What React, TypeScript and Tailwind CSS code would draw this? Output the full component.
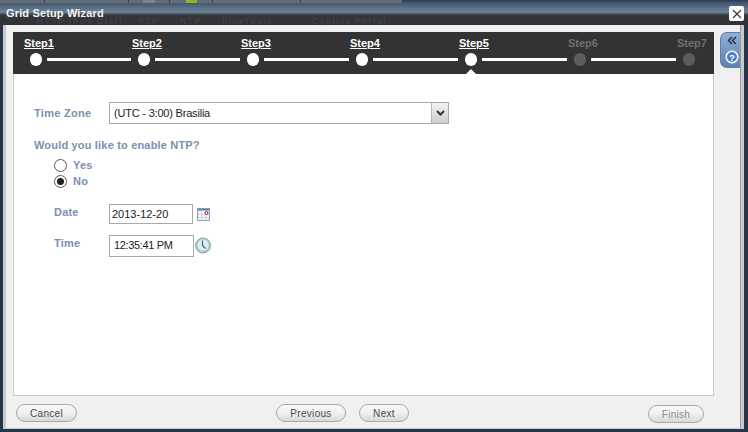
const steps = [
  { name: "Step1", active: true, width: "w-[108px]", line: "w-[84px]" },
  { name: "Step2", active: true, width: "w-[109px]", line: "w-[85px]" },
  { name: "Step3", active: true, width: "w-[109px]", line: "w-[85px]" },
  { name: "Step4", active: true, width: "w-[109px]", line: "w-[85px]" },
  { name: "Step5", active: true, width: "w-[109px]", line: "w-[85px]", current: true },
  { name: "Step6", active: false, width: "w-[109px]", line: "w-[85px]" },
  { name: "Step7", active: false, width: "w-[32px]" },
];

function Step({ name, active, current, width, line }: { name: string; active: boolean; current?: boolean; width: string; line?: string }) {
  return (
    <div className={`relative flex h-[42px] flex-col ${width}`}>
      <span
        className={`mt-[5px] h-[13px] text-[11px] font-bold leading-[13px] ${
          active ? "text-white underline" : "text-[#707070]"
        }`}
      >
        {name}
      </span>
      <div className="mt-[3px] flex items-center">
        <div className={`ml-[6px] h-[13px] w-[12px] shrink-0 rounded-full ${active ? "bg-white" : "bg-[#5c5c5c]"}`} />
        {line && <div className={`ml-[5px] h-[3px] ${line} bg-white`} />}
      </div>
      {current && (
        <div className="absolute bottom-0 left-[7px] h-0 w-0 border-x-[5px] border-b-[5px] border-x-transparent border-b-white" />
      )}
    </div>
  );
}

function PillButton({ label, className, disabled }: { label: string; className: string; disabled?: boolean }) {
  return (
    <button
      className={`h-[18px] shrink-0 rounded-full border border-[#a8a8a8] bg-gradient-to-b from-[#f8f8f8] via-[#f0f0f0] to-[#d8d8d8] text-[10px] leading-[15px] tracking-[0.3px] ${className} ${
        disabled ? "text-[#8a8a8a]" : "text-[#4a4a4a]"
      }`}
    >
      {label}
    </button>
  );
}

function Radio({ label, checked }: { label: string; checked?: boolean }) {
  return (
    <div className="flex h-[16px] items-center">
      <span className="flex h-[13px] w-[13px] items-center justify-center rounded-full border border-[#555555] bg-white">
        {checked && <span className="h-[7px] w-[7px] rounded-full bg-[#222222]" />}
      </span>
      <span className="ml-[6px] text-[11px] font-bold tracking-[0.2px] text-[#7b8fae]">{label}</span>
    </div>
  );
}

function CalendarIcon() {
  return (
    <svg width="13" height="13" viewBox="0 0 13 13" className="ml-[4px]">
      <rect x="0.5" y="0.5" width="12" height="12" fill="#f1f3f6" stroke="#8ba0b8" />
      <rect x="1" y="1" width="11" height="1.5" fill="#5f7fa3" />
      <path d="M1 6.5h11M1 9.5h11M4.5 3v9M8.5 3v9" stroke="#d3d9e0" fill="none" />
      <circle cx="9.5" cy="5" r="1.5" fill="#f1f3f6" stroke="#a01d2c" />
    </svg>
  );
}

function ClockIcon() {
  return (
    <svg width="16" height="17" viewBox="0 0 16 17" className="ml-[1px]">
      <circle cx="8" cy="8.5" r="7.5" fill="#a9cdd0" stroke="#7fa5ad" />
      <circle cx="8" cy="8" r="5.5" fill="#dfeced" />
      <path d="M7.5 3.5v5l3 3" stroke="#47677a" strokeWidth="1.2" fill="none" />
    </svg>
  );
}

const tabSeparators = ["left-[44px]", "left-[128px]", "left-[169px]", "left-[212px]", "left-[300px]"];

export default function App() {
  return (
    <div className="relative flex h-[432px] w-[748px] flex-col overflow-hidden bg-[#24344b] font-['Liberation_Sans',Arial,sans-serif]">
      <div className="relative h-[25px] shrink-0 overflow-hidden bg-[linear-gradient(to_bottom,#2c3b50_0px,#44586f_3px,#6d8298_12px,#5b6e81_13px,#343639_15px,#2f3337_25px)]">
        <div className="absolute left-0 top-0 h-[3px] w-[402px] bg-[#626d75]" />
        {tabSeparators.map((s) => (
          <div key={s} className={`absolute top-0 h-[3px] w-[1px] bg-[#3a4048] ${s}`} />
        ))}
        <div className="absolute left-[143px] top-0 h-[3px] w-[12px] bg-[#7a8389]" />
        <div className="absolute left-[186px] top-0 h-[3px] w-[11px] bg-[#8fb520]" />
        <div className="absolute left-[37px] top-[17px] flex text-[9px] font-bold leading-[8px] text-[#3d4146]">
          <span className="w-[102px] tracking-[1.2px]">HTTP (File Dist)</span>
          <span className="w-[41px] tracking-[1px]">FTP</span>
          <span className="w-[42px] tracking-[1px]">NTP</span>
          <span className="w-[90px] tracking-[1px]">bloxTools</span>
          <span className="tracking-[1px]">Captive Portal</span>
        </div>
        <span className="absolute left-[6px] top-[9px] text-[11px] font-bold leading-[8px] tracking-[0.15px] text-[#f2f2f2]">
          Grid Setup Wizard
        </span>
        <div className="absolute right-[4px] top-[6px] flex h-[15px] w-[15px] items-center justify-center rounded-[2px] bg-white">
          <svg width="10" height="10" viewBox="0 0 10 10">
            <path d="M1 1l8 8M9 1l-8 8" stroke="#333333" strokeWidth="1.1" fill="none" />
          </svg>
        </div>
      </div>

      <div className="mb-[3px] ml-[3px] mr-[4px] flex min-h-0 flex-1 border-b border-l-[3px] border-r-[3px] border-[#c9cacb] bg-[#f0f0f0]">
        <div className="flex min-w-0 flex-1 flex-col pl-[7px] pt-[7px]">
          <div className="flex h-[42px] w-[701px] shrink-0 bg-[#333333] pl-[11px]">
            {steps.map((s) => (
              <Step key={s.name} {...s} />
            ))}
          </div>
          <div className="h-[322px] w-[701px] shrink-0 border-b border-l border-r border-[#cccccc] bg-white pl-[20px] pt-[28px]">
            <div className="flex items-center">
              <span className="w-[75px] text-[11px] font-bold tracking-[0.3px] text-[#7b8fae]">Time Zone</span>
              <div className="flex h-[22px] w-[340px] items-center border border-[#a9a9a9] bg-white pl-[4px]">
                <span className="flex-1 text-[11px] tracking-[-0.2px] text-[#222222]">(UTC - 3:00) Brasilia</span>
                <div className="flex h-full w-[17px] items-center justify-center border-l border-[#b5b5b5] bg-gradient-to-b from-[#f2f2f2] to-[#cfcfcf]">
                  <svg width="9" height="6" viewBox="0 0 9 6">
                    <path d="M1 1l3.5 3.5L8 1" stroke="#333333" strokeWidth="2" fill="none" />
                  </svg>
                </div>
              </div>
            </div>
            <div className="mt-[15px] h-[13px] text-[11px] font-bold leading-[13px] tracking-[0.18px] text-[#7b8fae]">
              Would you like to enable NTP?
            </div>
            <div className="ml-[20px] mt-[5px] flex flex-col">
              <Radio label="Yes" />
              <Radio label="No" checked />
            </div>
            <div className="mt-[15px] flex items-center">
              <span className="mb-[4px] ml-[20px] w-[55px] text-[11px] font-bold tracking-[0.2px] text-[#7b8fae]">Date</span>
              <div className="flex h-[20px] w-[84px] items-center border border-[#a9a9a9] bg-white pl-[2px] text-[11px] text-[#222222]">
                2013-12-20
              </div>
              <CalendarIcon />
            </div>
            <div className="mt-[10px] flex items-center">
              <span className="mb-[4px] ml-[20px] w-[55px] text-[11px] font-bold tracking-[0.2px] text-[#7b8fae]">Time</span>
              <div className="flex h-[22px] w-[85px] items-center border border-[#a9a9a9] bg-white pl-[4px] text-[11px] tracking-[-0.35px] text-[#222222]">
                12:35:41 PM
              </div>
              <ClockIcon />
            </div>
          </div>
          <div className="mt-[8px] flex w-[691px] items-start pl-[3px]">
            <PillButton label="Cancel" className="w-[61px]" />
            <PillButton label="Previous" className="ml-[199px] w-[70px]" />
            <PillButton label="Next" className="ml-[13px] w-[50px]" />
            <PillButton label="Finish" className="ml-[239px] mt-[1px] w-[56px]" disabled />
          </div>
        </div>
        <div className="w-[21px] shrink-0 border-r border-[#9a9a9a] pt-[7px]">
          <div className="h-[36px] w-[20px] rounded-l-[7px] border border-r-0 border-[#5f7fa8] bg-gradient-to-b from-[#8fb0d6] to-[#5f83b0]">
            <svg width="19" height="34" viewBox="0 0 19 34">
              <path d="M11 4L7.5 7.5L11 11M15 4L11.5 7.5L15 11" stroke="#1f2c3f" strokeWidth="1.4" fill="none" />
              <circle cx="11" cy="24" r="6.5" fill="#ffffff" />
              <circle cx="11" cy="24" r="5" fill="#4f81c0" />
              <text x="11" y="27.5" textAnchor="middle" fontSize="9" fontWeight="700" fill="#ffffff" fontFamily="Liberation Sans">?</text>
            </svg>
          </div>
        </div>
      </div>
    </div>
  );
}
